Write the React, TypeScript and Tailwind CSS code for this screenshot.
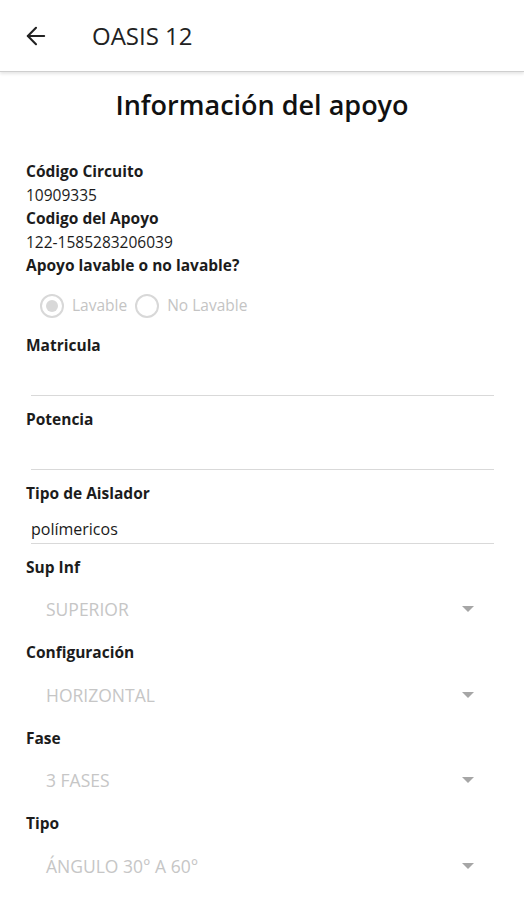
import { ArrowLeft } from "lucide-react";

const info = [
  { text: "Código Circuito", bold: true },
  { text: "10909335", bold: false },
  { text: "Codigo del Apoyo", bold: true },
  { text: "122-1585283206039", bold: false },
  { text: "Apoyo lavable o no lavable?", bold: true },
];

function TextField({ label, value }: { label: string; value?: string }) {
  return (
    <div className="mb-[11px]">
      <div className="h-[24px] leading-[24px] text-[15.5px] font-bold text-[#1c1c1c]">{label}</div>
      <div className="ml-[5px] mr-[4px] h-[39px] border-b border-[#d9d9d9] flex items-end pb-[4px]">
        <span className="leading-[20px] text-[16px] text-[#1a1a1a]">{value ?? ""}</span>
      </div>
    </div>
  );
}

function SelectField({ label, value }: { label: string; value: string }) {
  return (
    <div>
      <div className="h-[24px] leading-[24px] text-[15.5px] font-bold text-[#1c1c1c]">{label}</div>
      <div className="h-[61.5px] flex items-center pl-[20px] pr-[24px]">
        <span className="flex-1 text-[17.5px] text-[#c6c6c6]">{value}</span>
        <svg width="12" height="6" viewBox="0 0 12 6">
          <path d="M0 0 L12 0 L6 6 Z" fill="#a6a6a6" />
        </svg>
      </div>
    </div>
  );
}

function Radio({ label, checked }: { label: string; checked?: boolean }) {
  return (
    <div className="flex items-center gap-[8px]">
      <div className="w-[24px] h-[24px] rounded-full border-2 border-[#d8d8d8] flex items-center justify-center">
        {checked && <div className="w-[12px] h-[12px] rounded-full bg-[#d8d8d8]" />}
      </div>
      <span className="text-[15.5px] text-[#c4c4c4]">{label}</span>
    </div>
  );
}

export default function App() {
  return (
    <div className="w-[524px] h-[900px] bg-white overflow-hidden" style={{ fontFamily: "'Open Sans', 'Noto Sans', sans-serif" }}>
      {/* Header */}
      <header className="h-[72px] flex items-center border-b border-[#cfcfcf] shadow-[0_2px_3px_rgba(0,0,0,0.10)]">
        <ArrowLeft className="ml-[22px] w-[28px] h-[28px] text-[#222]" strokeWidth={1.8} />
        <h1 className="ml-[42px] text-[24px] text-[#222]">OASIS 12</h1>
      </header>

      <main className="px-[26px]">
        <h2 className="mt-[16px] h-[34px] leading-[34px] text-center text-[27px] font-semibold text-[#111]">
          Información del apoyo
        </h2>

        {/* Info rows */}
        <div className="mt-[38px]">
          {info.map((row) => (
            <div
              key={row.text}
              className={`h-[23.5px] leading-[23.5px] text-[15.5px] text-[#1c1c1c] ${row.bold ? "font-bold" : ""}`}
            >
              {row.text}
            </div>
          ))}
        </div>

        <div className="mt-[8px] h-[40px] flex items-center gap-[8px] pl-[14px]">
          <Radio label="Lavable" checked />
          <Radio label="No Lavable" />
        </div>

        <div className="mt-[7px]">
          <TextField label="Matricula" />
          <TextField label="Potencia" />
          <TextField label="Tipo de Aislador" value="polímericos" />
        </div>

        <SelectField label="Sup Inf" value="SUPERIOR" />
        <SelectField label="Configuración" value="HORIZONTAL" />
        <SelectField label="Fase" value="3 FASES" />
        <SelectField label="Tipo" value="ÁNGULO 30° A 60°" />
      </main>
    </div>
  );
}
